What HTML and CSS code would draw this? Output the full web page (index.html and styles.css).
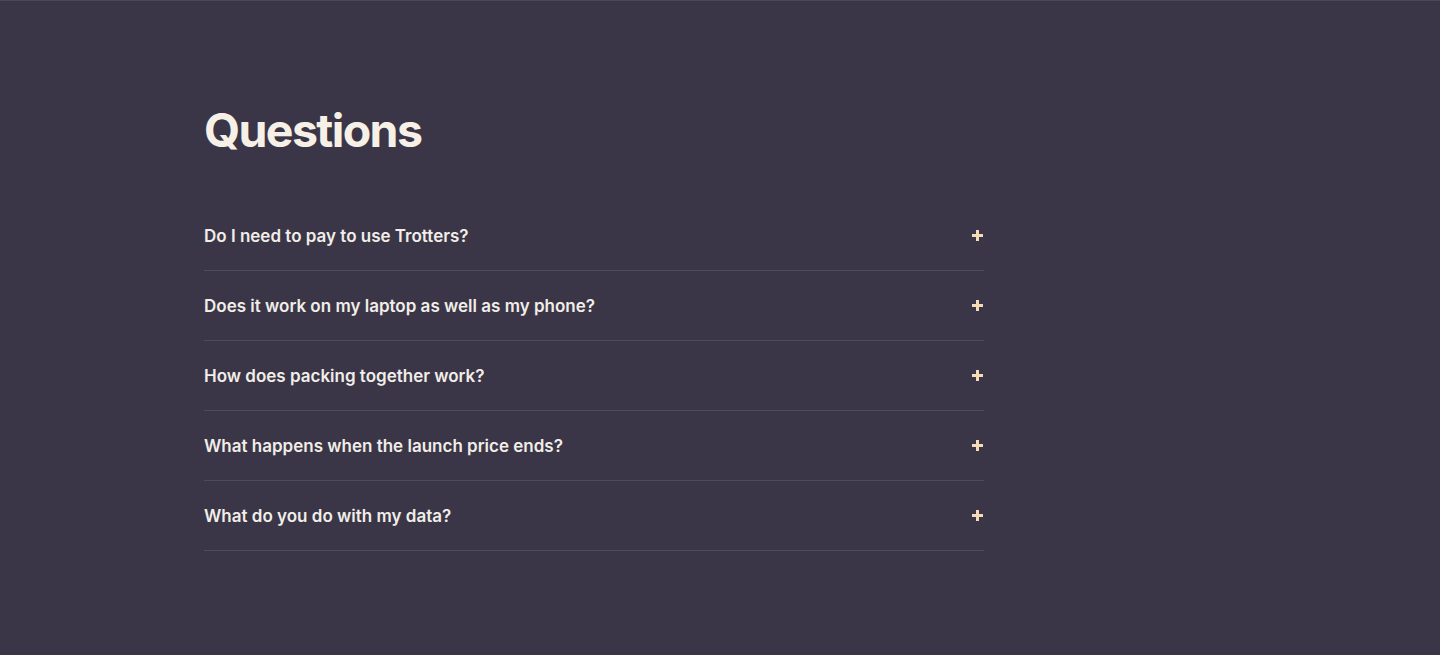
FILE: index.html
```html
<!DOCTYPE html>
<html lang="en">
<head>
    <meta charset="UTF-8">
    <meta name="viewport" content="width=device-width, initial-scale=1.0">
    <title>Questions</title>
    <link rel="stylesheet" href="styles.css">
</head>
<body>
    <section class="faq">
        <h2 class="faq-title">Questions</h2>
        <div class="faq-list">
            <div class="faq-item">
                <span class="faq-q">Do I need to pay to use Trotters?</span>
                <span class="faq-plus"></span>
            </div>
            <div class="faq-item">
                <span class="faq-q">Does it work on my laptop as well as my phone?</span>
                <span class="faq-plus"></span>
            </div>
            <div class="faq-item">
                <span class="faq-q">How does packing together work?</span>
                <span class="faq-plus"></span>
            </div>
            <div class="faq-item">
                <span class="faq-q">What happens when the launch price ends?</span>
                <span class="faq-plus"></span>
            </div>
            <div class="faq-item">
                <span class="faq-q">What do you do with my data?</span>
                <span class="faq-plus"></span>
            </div>
        </div>
    </section>
</body>
</html>
```

FILE: styles.css
```css
html, body {
    margin: 0;
    padding: 0;
}
body {
    background-color: #3a3647;
    font-family: Inter, "Noto Sans", sans-serif;
    color: #f1ede7;
    height: 655px;
    border-top: 1px solid #4c4859;
    box-sizing: border-box;
}
.faq {
    width: 780px;
    margin-left: 204px;
    padding-top: 101px;
}
.faq-title {
    margin: 0 0 43px 0;
    font-size: 46.5px;
    font-weight: 700;
    letter-spacing: -0.035em;
    line-height: 56px;
    color: #f6f0e6;
}
.faq-item {
    display: flex;
    align-items: center;
    justify-content: space-between;
    height: 69px;
    border-bottom: 1px solid #4f4b5c;
}
.faq-q {
    font-size: 17px;
    font-weight: 600;
}
.faq-plus {
    position: relative;
    width: 11px;
    height: 11px;
    margin-right: 1px;
}
.faq-plus::before,
.faq-plus::after {
    content: "";
    position: absolute;
    background-color: #f6dcb6;
}
.faq-plus::before {
    left: 0;
    top: 4px;
    width: 11px;
    height: 3px;
}
.faq-plus::after {
    left: 4px;
    top: 0;
    width: 3px;
    height: 11px;
}
```
